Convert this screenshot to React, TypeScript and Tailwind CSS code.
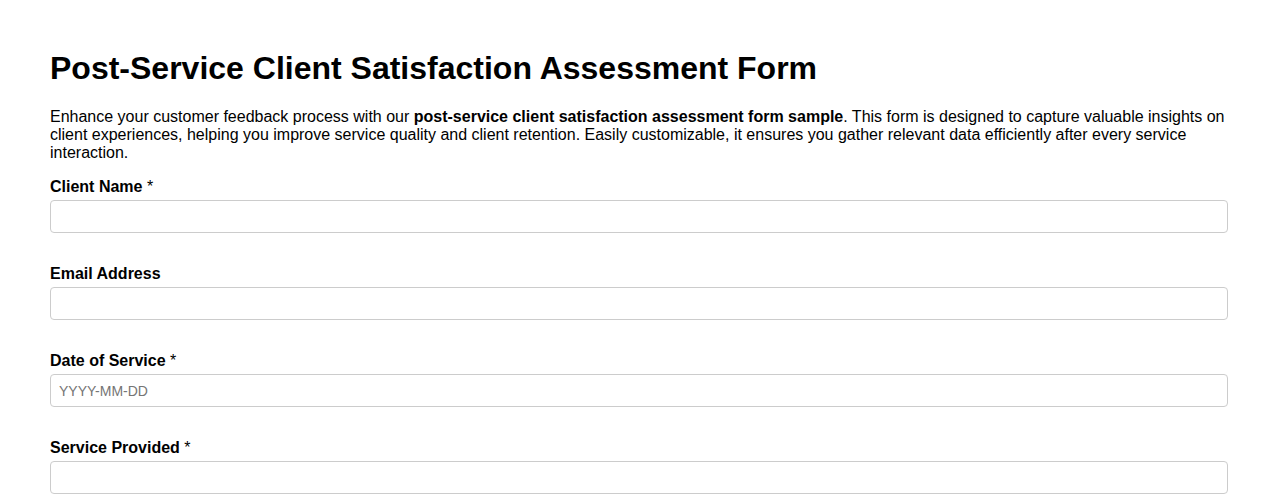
export default function App() {
  const fields = [
    { label: 'Client Name', required: true, placeholder: '' },
    { label: 'Email Address', required: false, placeholder: '' },
    { label: 'Date of Service', required: true, placeholder: 'YYYY-MM-DD' },
    { label: 'Service Provided', required: true, placeholder: '' },
  ];

  return (
    <div className="px-[50px] pt-[50px] pb-10 bg-white text-black" style={{ fontFamily: '"Liberation Sans", Arial, sans-serif' }}>
      <h1 className="text-[32px] leading-[37px] font-bold">Post-Service Client Satisfaction Assessment Form</h1>
      <p className="mt-[21px] text-base leading-[18px]">
        Enhance your customer feedback process with our <strong>post-service client satisfaction assessment form sample</strong>. This form is designed to capture valuable insights on client experiences, helping you improve service quality and client retention. Easily customizable, it ensures you gather relevant data efficiently after every service interaction.
      </p>

      <form className="mt-4">
        {fields.map((f) => (
          <div key={f.label} className="mb-8">
            <label className="block text-base leading-[18px] font-bold mb-1">
              {f.label}{f.required && <span className="font-normal"> *</span>}
            </label>
            <input
              type="text"
              placeholder={f.placeholder}
              className="block w-full h-[33px] px-2 border border-[#cccccc] rounded text-sm placeholder:text-[#757575] outline-none"
            />
          </div>
        ))}
      </form>
    </div>
  );
}
